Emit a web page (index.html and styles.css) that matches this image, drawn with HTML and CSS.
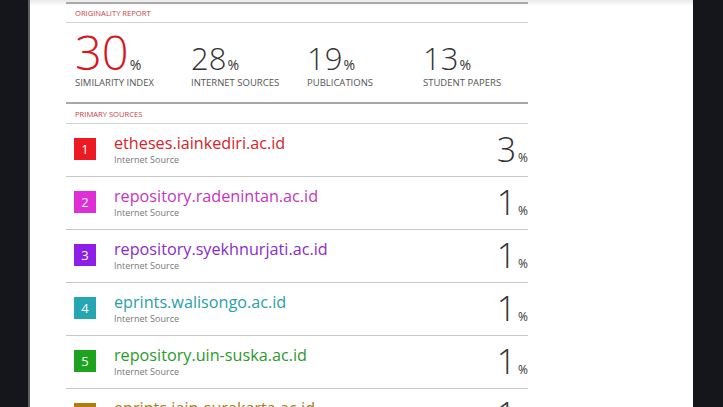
FILE: index.html
```html
<!DOCTYPE html>
<html>
<head>
<meta charset="utf-8">
<link rel="stylesheet" href="styles.css">
</head>
<body>
<div class="page">
  <div class="report">
    <div class="head head-top">ORIGINALITY REPORT</div>
    <div class="stats">
      <div class="stat">
        <div class="num"><span class="big red">30</span><span class="pct">%</span></div>
        <div class="label">SIMILARITY INDEX</div>
      </div>
      <div class="stat">
        <div class="num"><span class="mid">28</span><span class="pct">%</span></div>
        <div class="label">INTERNET SOURCES</div>
      </div>
      <div class="stat">
        <div class="num"><span class="mid">19</span><span class="pct">%</span></div>
        <div class="label">PUBLICATIONS</div>
      </div>
      <div class="stat">
        <div class="num"><span class="mid">13</span><span class="pct">%</span></div>
        <div class="label">STUDENT PAPERS</div>
      </div>
    </div>
    <div class="head head-primary">PRIMARY SOURCES</div>
    <div class="row c1">
      <div class="box">1</div>
      <div class="info"><div class="title">etheses.iainkediri.ac.id</div><div class="type">Internet Source</div></div>
      <div class="perc">3<span class="ps">%</span></div>
    </div>
    <div class="row c2">
      <div class="box">2</div>
      <div class="info"><div class="title">repository.radenintan.ac.id</div><div class="type">Internet Source</div></div>
      <div class="perc">1<span class="ps">%</span></div>
    </div>
    <div class="row c3">
      <div class="box">3</div>
      <div class="info"><div class="title">repository.syekhnurjati.ac.id</div><div class="type">Internet Source</div></div>
      <div class="perc">1<span class="ps">%</span></div>
    </div>
    <div class="row c4">
      <div class="box">4</div>
      <div class="info"><div class="title">eprints.walisongo.ac.id</div><div class="type">Internet Source</div></div>
      <div class="perc">1<span class="ps">%</span></div>
    </div>
    <div class="row c5">
      <div class="box">5</div>
      <div class="info"><div class="title">repository.uin-suska.ac.id</div><div class="type">Internet Source</div></div>
      <div class="perc">1<span class="ps">%</span></div>
    </div>
    <div class="row c6">
      <div class="box">6</div>
      <div class="info"><div class="title">eprints.iain-surakarta.ac.id</div><div class="type">Internet Source</div></div>
      <div class="perc">1<span class="ps">%</span></div>
    </div>
  </div>
</div>
</body>
</html>
```
FILE: styles.css
```css
html, body {
  margin: 0;
  padding: 0;
  height: 100%;
  overflow: hidden;
  background: #15161b;
}
body {
  font-family: "Open Sans", "Noto Sans", sans-serif;
}
.page {
  margin-left: 28px;
  width: 663px;
  height: 407px;
  border-left: 2px solid #5e5f63;
  background: linear-gradient(#e9e9e9 0, #ffffff 6px);
  overflow: hidden;
}
.report {
  margin-left: 36px;
  width: 462px;
  padding-top: 2px;
}
.head {
  height: 19px;
  box-sizing: border-box;
  padding-left: 9px;
  font-size: 7.6px;
  line-height: 19px;
  color: #c8413b;
  border-bottom: 1px solid #d2d2d2;
}
.head-top {
  border-top: 2px solid #a8a8a8;
  height: 21px;
}
.head-primary {
  border-top: 2px solid #a8a8a8;
  height: 22px;
  line-height: 20px;
}
.stats {
  display: grid;
  grid-template-columns: 116px 116px 116px 114px;
  padding-left: 9px;
  height: 79px;
  box-sizing: border-box;
  padding-top: 6px;
}
.num {
  font-size: 46px;
  line-height: 46px;
  color: #333;
  font-weight: 300;
  white-space: nowrap;
}
.big {
  font-size: 47px;
  line-height: 46px;
}
.red { color: #d8171c; }
.mid {
  font-size: 31px;
  line-height: 31px;
}
.pct {
  font-size: 14px;
  line-height: 14px;
  font-weight: 400;
  margin-left: 1px;
}
.label {
  margin-top: 1px;
  font-size: 9.5px;
  line-height: 14px;
  color: #555;
}
.row {
  display: flex;
  align-items: flex-start;
  height: 53px;
  box-sizing: border-box;
  border-bottom: 1px solid #c8c8c8;
  padding-left: 8px;
}
.box {
  width: 22px;
  height: 22px;
  margin-top: 14px;
  color: #fff;
  font-size: 13px;
  line-height: 22px;
  text-align: center;
  flex: none;
}
.info {
  margin-left: 18px;
  margin-top: 9px;
  flex: 1;
}
.title {
  font-size: 16.2px;
  line-height: 20px;
}
.type {
  font-size: 9px;
  line-height: 13px;
  color: #777;
}
.perc {
  margin-top: 8px;
  font-size: 34px;
  line-height: 34px;
  font-weight: 300;
  color: #333;
  white-space: nowrap;
}
.ps {
  font-size: 12px;
  line-height: 12px;
  font-weight: 400;
  margin-left: 2px;
}
.c1 .box { background: #ec1b23; }
.c1 .title { color: #d42428; }
.c2 .box { background: #de2fd6; }
.c2 .title { color: #c536bd; }
.c3 .box { background: #8d1fe6; }
.c3 .title { color: #8a2ccb; }
.c4 .box { background: #26a6b0; }
.c4 .title { color: #289fa7; }
.c5 .box { background: #1da31d; }
.c5 .title { color: #2a9b2a; }
.c6 .box { background: #b07f0a; }
.c6 .title { color: #a67b14; }
```
